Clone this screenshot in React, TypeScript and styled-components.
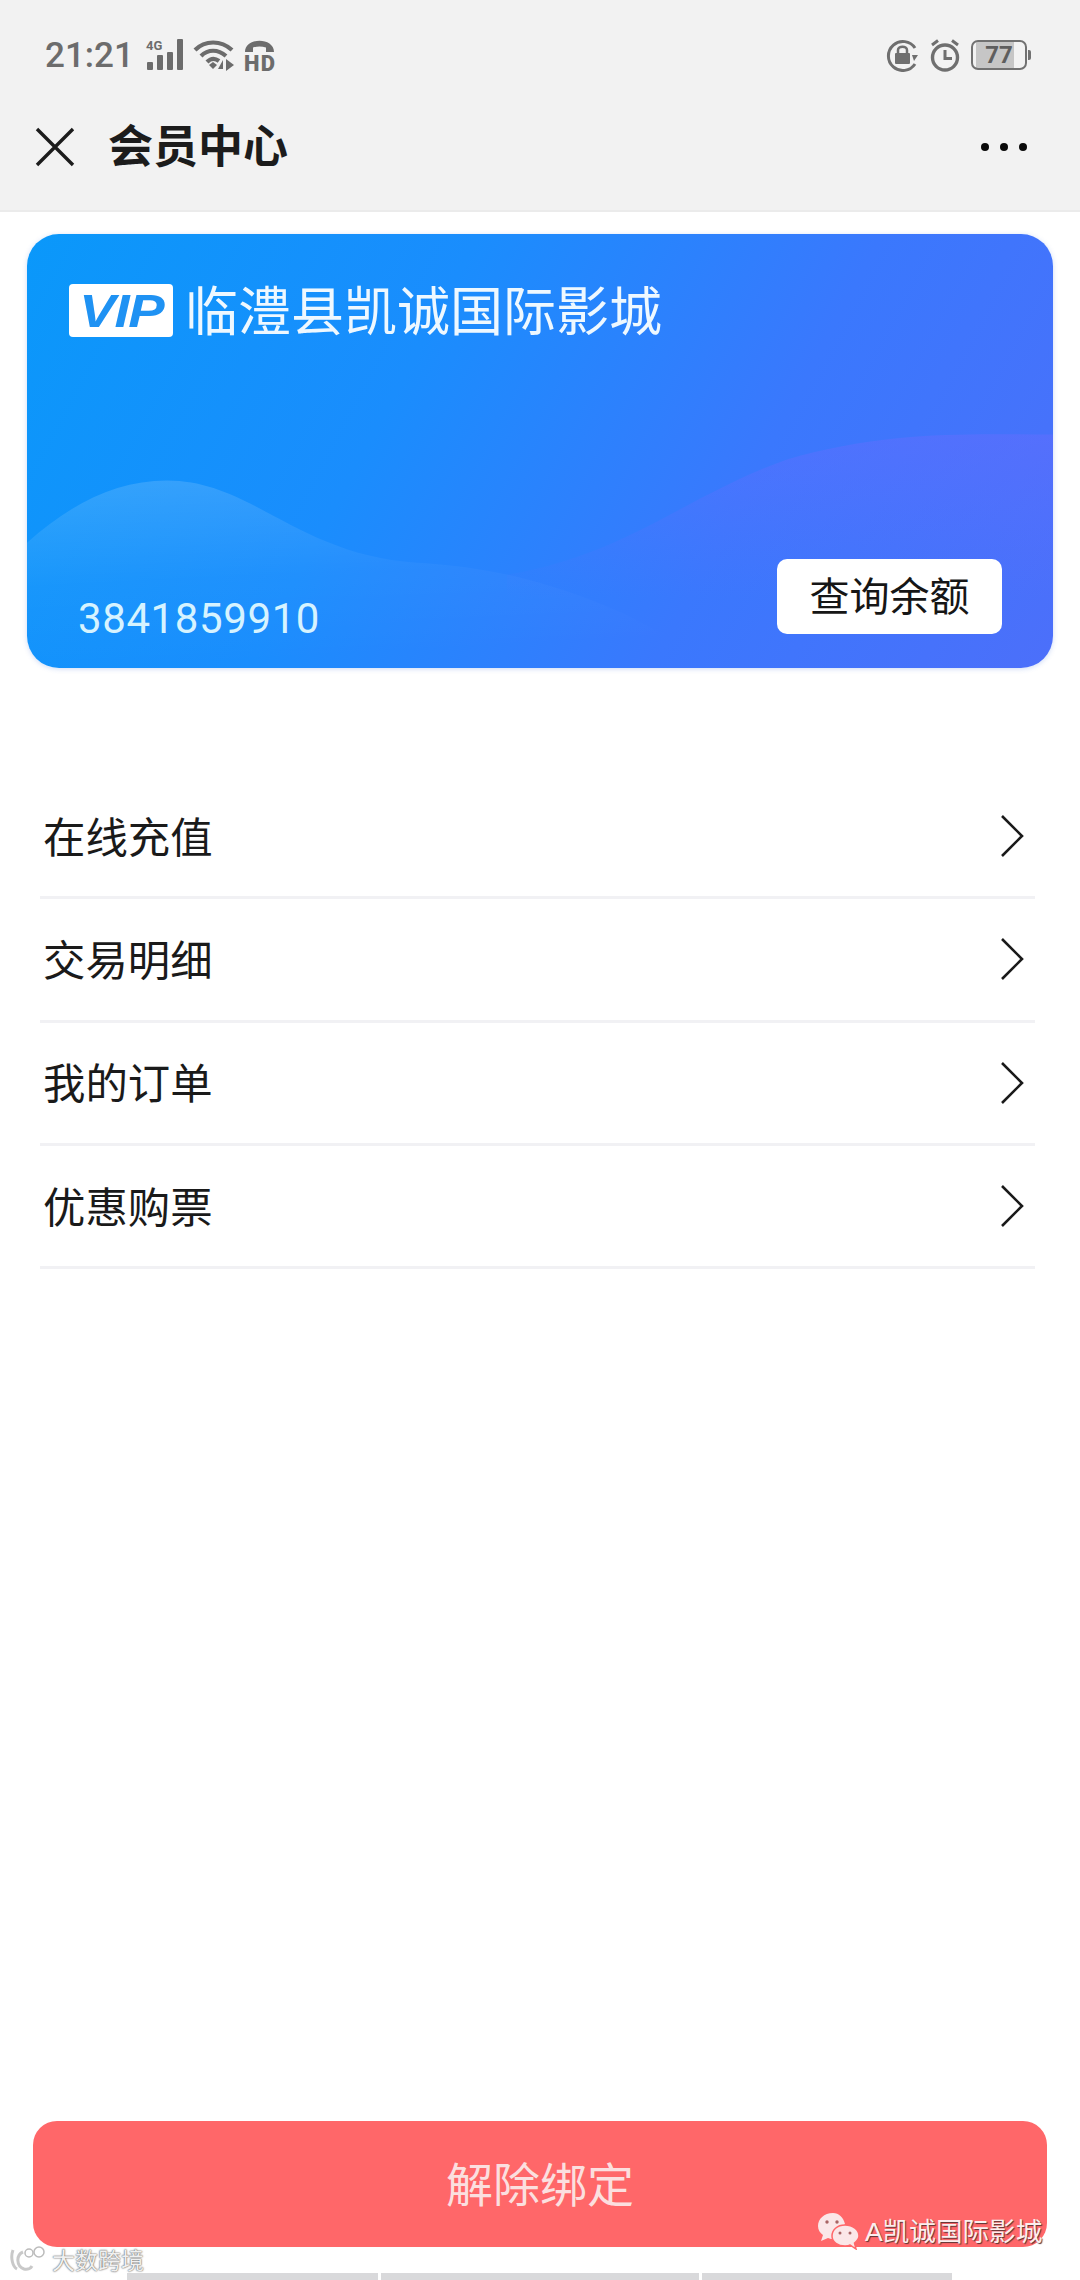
import React from 'react';
import styled, { createGlobalStyle } from 'styled-components';

const CJK = `"Noto Sans CJK SC", Roboto, sans-serif`;

const GlobalStyle = createGlobalStyle`
  html, body {
    margin: 0;
    padding: 0;
    background: #ffffff;
  }
  * {
    box-sizing: border-box;
  }
`;

const Page = styled.div`
  position: relative;
  display: flex;
  flex-direction: column;
  width: 1080px;
  height: 2280px;
  overflow: hidden;
  background: #ffffff;
  font-family: ${CJK};
`;

const Header = styled.header`
  height: 212px;
  padding-bottom: 27px;
  background: #f2f2f2;
  border-bottom: 2px solid #ebebeb;
`;

const StatusBar = styled.div`
  display: flex;
  align-items: center;
  justify-content: space-between;
  height: 110px;
  padding: 0 49px 0 45px;
`;

const StatusGroup = styled.div<{ $gap: number }>`
  display: flex;
  align-items: center;
  gap: ${p => p.$gap}px;
`;

const Clock = styled.span`
  font-family: Roboto, sans-serif;
  font-size: 35px;
  font-weight: 500;
  color: #6c6c6c;
  margin-right: 3px;
`;

const Battery = styled.div`
  position: relative;
  display: flex;
  align-items: center;
  justify-content: center;
  width: 56px;
  height: 30px;
  border: 2px solid #717171;
  border-radius: 7px;
  margin-right: 4px;
  font-family: Roboto, sans-serif;
  font-size: 24px;
  font-weight: 700;
  color: #5e5e5e;
  background: linear-gradient(90deg, #f2f2f2 3px, #c6c6c6 3px, #c6c6c6 41px, #f2f2f2 41px);

  &::after {
    content: '';
    position: absolute;
    right: -6px;
    top: 8px;
    width: 3px;
    height: 10px;
    background: #717171;
    border-radius: 0 2px 2px 0;
  }
`;

const NavBar = styled.div`
  display: flex;
  align-items: center;
  height: 73px;
  padding: 0 53px 0 35px;
`;

const NavTitle = styled.h1`
  flex: 1;
  margin: 0 0 5px 33px;
  font-size: 45px;
  font-weight: 700;
  line-height: 60px;
  color: #1c1c1c;
`;

const Dots = styled.div`
  display: flex;
  gap: 11px;

  span {
    width: 8px;
    height: 8px;
    border-radius: 50%;
    background: #0a0a0a;
  }
`;

const Card = styled.section`
  position: relative;
  height: 434px;
  margin: 22px 27px 0 27px;
  border-radius: 32px;
  overflow: hidden;
  background: linear-gradient(118deg, #0a98fa 0%, #1a8dfd 36%, #3a78fd 68%, #4c6ffa 100%);
  box-shadow: 0 1px 5px rgba(60, 110, 220, 0.25);
`;

const Waves = styled.svg`
  position: absolute;
  left: 0;
  top: 0;
  width: 100%;
  height: 100%;
`;

const CardInner = styled.div`
  position: relative;
  display: flex;
  flex-direction: column;
  justify-content: space-between;
  height: 100%;
  padding: 44px 51px 34px 42px;
`;

const CardTop = styled.div`
  display: flex;
  align-items: center;
  gap: 12px;
`;

const VipBadge = styled.span`
  display: flex;
  align-items: center;
  justify-content: center;
  width: 104px;
  height: 53px;
  border-radius: 4px;
  background: #ffffff;
  font-family: "Liberation Sans", sans-serif;
  font-size: 47px;
  font-style: italic;
  font-weight: 700;
  letter-spacing: -1px;
  color: #1f92f3;

  span {
    display: inline-block;
    transform: scaleX(1.16);
  }
`;

const CardName = styled.h2`
  margin: 0 0 5px;
  font-size: 53px;
  font-weight: 400;
  line-height: 60px;
  color: #eef8ff;
`;

const CardBottom = styled.div`
  display: flex;
  align-items: flex-end;
  justify-content: space-between;
`;

const CardNumber = styled.span`
  margin: 0 0 -6px 9px;
  font-family: Roboto, sans-serif;
  font-size: 42px;
  line-height: 42px;
  letter-spacing: 0.6px;
  color: #d6f3ff;
`;

const BalanceButton = styled.button`
  width: 225px;
  height: 75px;
  padding: 0 0 5px;
  border: none;
  border-radius: 10px;
  background: #ffffff;
  font-family: ${CJK};
  font-size: 40px;
  color: #161616;
`;

const Menu = styled.ul`
  list-style: none;
  margin: 108px 45px 0 40px;
  padding: 0;
`;

const MenuRow = styled.li`
  display: flex;
  align-items: center;
  justify-content: space-between;
  height: 123.3px;
  padding: 0 11px 0 3px;
  border-bottom: 3px solid #f1f1f4;
  color: #1a1a1a;
`;

const MenuLabel = styled.span`
  margin-bottom: 4px;
  font-size: 42.4px;
`;

const Chevron = styled.svg`
  width: 24px;
  height: 42px;
`;

const Unbind = styled.button`
  align-self: flex-start;
  width: 1014px;
  height: 126px;
  margin: auto 0 26px 33px;
  padding: 0 0 6px;
  border: none;
  border-radius: 24px;
  background: #ff6769;
  font-family: ${CJK};
  font-size: 47px;
  color: #fbdfdf;
`;

const BottomBars = styled.div`
  display: flex;
  gap: 3px;
  height: 7px;
  padding-left: 127px;
`;

const BottomBar = styled.span<{ $width: number }>`
  width: ${p => p.$width}px;
  background: #d9d9db;
`;

const MarkLeft = styled.div`
  position: absolute;
  left: 10px;
  top: 2244px;
  display: flex;
  align-items: center;
  gap: 6px;
  font-size: 23px;
  line-height: 30px;
  color: #f0f0f0;
  text-shadow: 0 0 2px #666666, 0 0 1px #666666;
`;

const MarkRight = styled.div`
  position: absolute;
  left: 817px;
  top: 2211px;
  display: flex;
  align-items: center;
  gap: 6px;
  font-size: 26.6px;
  line-height: 38px;
  color: #fbeeee;
  text-shadow: 1px 1px 1px #5a3333;

  b {
    font-family: "Liberation Sans", sans-serif;
    font-weight: 400;
  }
`;

const StatusSvg = styled.svg`
  overflow: visible;
`;

const menuItems = ['在线充值', '交易明细', '我的订单', '优惠购票'];

const SignalIcon = () => (
  <StatusSvg width="38" height="32" viewBox="0 0 38 32">
    <text x="0" y="11" fontFamily="Roboto, sans-serif" fontSize="13" fontWeight="700" fill="#6c6c6c">
      4G
    </text>
    <g fill="#6c6c6c">
      <rect x="1" y="23" width="6" height="8" rx="1" />
      <rect x="11" y="16" width="6" height="15" rx="1" />
      <rect x="21" y="13" width="6" height="18" rx="1" />
      <rect x="31" y="0" width="6" height="31" rx="1" />
    </g>
  </StatusSvg>
);

const WifiIcon = () => (
  <StatusSvg width="42" height="32" viewBox="0 0 42 32">
    <g fill="none" stroke="#6c6c6c" strokeWidth="4.2">
      <path d="M2 11 C12 1 28 1 39 11" />
      <path d="M8 17 C15 10 25 10 33 17" />
      <path d="M14 23 C18 19 22 19 26 22" />
    </g>
    <path d="M16 26 L20 23 L24 26 L20 30 Z" fill="#6c6c6c" />
    <path d="M30 32 V21 L25 30 H30 Z M33 20 V32 L41 26 Z" fill="#6c6c6c" />
  </StatusSvg>
);

const HdIcon = () => (
  <StatusSvg width="31" height="33" viewBox="0 0 31 33">
    <path
      d="M1 13 C1 -2 30 -2 30 13 L22 13 L22 8.5 C18 7 13 7 9 8.5 L9 13 Z"
      fill="#6c6c6c"
    />
    <text x="0" y="32" fontFamily="Roboto, sans-serif" fontSize="22" fontWeight="900" fill="#6c6c6c" textLength="31">
      HD
    </text>
  </StatusSvg>
);

const LockIcon = () => (
  <svg width="33" height="33" viewBox="0 0 33 33">
    <path d="M29 25 A14.5 14.5 0 1 1 29 9" fill="none" stroke="#6f6f6f" strokeWidth="3" />
    <path d="M26 16 L32 16 L28 22 Z" fill="#6f6f6f" />
    <rect x="9" y="14" width="15" height="11" rx="1" fill="#6f6f6f" />
    <path d="M12 14 V11 C12 6.5 21 6.5 21 11 V14" fill="none" stroke="#6f6f6f" strokeWidth="2.5" />
  </svg>
);

const AlarmIcon = () => (
  <svg width="30" height="33" viewBox="0 0 30 33">
    <circle cx="15" cy="18.5" r="12.5" fill="none" stroke="#6f6f6f" strokeWidth="3.4" />
    <path d="M15 11 V19.5 H22" fill="none" stroke="#6f6f6f" strokeWidth="3" />
    <path d="M2 6 L8 1.5 M28 6 L22 1.5" stroke="#6f6f6f" strokeWidth="3" />
  </svg>
);

const WechatIcon = () => (
  <svg width="42" height="38" viewBox="0 0 42 38">
    <path d="M16 1 C7 1 1 7 1 14 C1 18 3 21 6 23 L4 29 L11 26 C13 27 15 27 17 27 L28 12 C26 5 22 1 16 1 Z" fill="#fbe7e8" />
    <path d="M28 13 C20 13 15 18 15 24 C15 30 21 34 28 34 C30 34 32 34 33 33 L39 37 L37.5 31 C40 29 42 27 42 24 C42 18 36 13 28 13 Z" fill="#fbe7e8" stroke="#ff6769" strokeWidth="1.5" />
    <g fill="#a86464">
      <circle cx="10" cy="10" r="1.7" />
      <circle cx="20" cy="10" r="1.7" />
      <circle cx="23" cy="21" r="1.5" />
      <circle cx="33" cy="21" r="1.5" />
    </g>
  </svg>
);

const WatermarkLogo = () => (
  <svg width="36" height="26" viewBox="0 0 36 26">
    <g fill="none" stroke="#c9c9c9" strokeWidth="3">
      <path d="M3 4 C0 12 3 21 7 23 M13 6 C6 9 6 20 14 23 C18 24 21 22 22 20" />
    </g>
    <g fill="none" stroke="#bbbbbb" strokeWidth="1.5">
      <circle cx="19" cy="7" r="4" />
      <circle cx="29" cy="6" r="5" />
    </g>
  </svg>
);

const App = () => {
  return (
    <>
      <GlobalStyle />
      <Page>
        <Header>
          <StatusBar>
            <StatusGroup $gap={9}>
              <Clock>21:21</Clock>
              <SignalIcon />
              <WifiIcon />
              <HdIcon />
            </StatusGroup>
            <StatusGroup $gap={11}>
              <LockIcon />
              <AlarmIcon />
              <Battery>77</Battery>
            </StatusGroup>
          </StatusBar>
          <NavBar>
            <svg width="40" height="40" viewBox="0 0 40 40">
              <path d="M2 2 L38 38 M38 2 L2 38" stroke="#1c1c1c" strokeWidth="3.4" />
            </svg>
            <NavTitle>会员中心</NavTitle>
            <Dots>
              <span />
              <span />
              <span />
            </Dots>
          </NavBar>
        </Header>

        <Card>
          <Waves viewBox="0 0 1026 433" preserveAspectRatio="none">
            <defs>
              <linearGradient id="waveLeft" x1="0" y1="0" x2="0.2" y2="1">
                <stop offset="0" stopColor="#ffffff" stopOpacity="0.15" />
                <stop offset="0.55" stopColor="#ffffff" stopOpacity="0.03" />
                <stop offset="1" stopColor="#ffffff" stopOpacity="0" />
              </linearGradient>
              <linearGradient id="waveRight" x1="0" y1="0" x2="0" y2="1">
                <stop offset="0" stopColor="#6a6cff" stopOpacity="0.4" />
                <stop offset="0.7" stopColor="#6a6cff" stopOpacity="0" />
              </linearGradient>
            </defs>
            <path
              d="M0 308 C45 268 90 246 140 246 C225 246 270 320 390 328 C460 332 520 345 600 380 L700 433 L0 433 Z"
              fill="url(#waveLeft)"
            />
            <path
              d="M480 340 C600 320 660 260 760 225 C860 195 950 200 1026 200 L1026 433 L480 433 Z"
              fill="url(#waveRight)"
            />
          </Waves>
          <CardInner>
            <CardTop>
              <VipBadge>
                <span>VIP</span>
              </VipBadge>
              <CardName>临澧县凯诚国际影城</CardName>
            </CardTop>
            <CardBottom>
              <CardNumber>3841859910</CardNumber>
              <BalanceButton>查询余额</BalanceButton>
            </CardBottom>
          </CardInner>
        </Card>

        <Menu>
          {menuItems.map(item => (
            <MenuRow key={item}>
              <MenuLabel>{item}</MenuLabel>
              <Chevron viewBox="0 0 24 42">
                <path d="M2 1 L22 21 L2 41" fill="none" stroke="#1a1a1a" strokeWidth="2.6" />
              </Chevron>
            </MenuRow>
          ))}
        </Menu>

        <Unbind>解除绑定</Unbind>
        <BottomBars>
          <BottomBar $width={251} />
          <BottomBar $width={318} />
          <BottomBar $width={250} />
        </BottomBars>

        <MarkLeft>
          <WatermarkLogo />
          大数跨境
        </MarkLeft>
        <MarkRight>
          <WechatIcon />
          <span>
            <b>A</b>凯诚国际影城
          </span>
        </MarkRight>
      </Page>
    </>
  );
};

export default App;
